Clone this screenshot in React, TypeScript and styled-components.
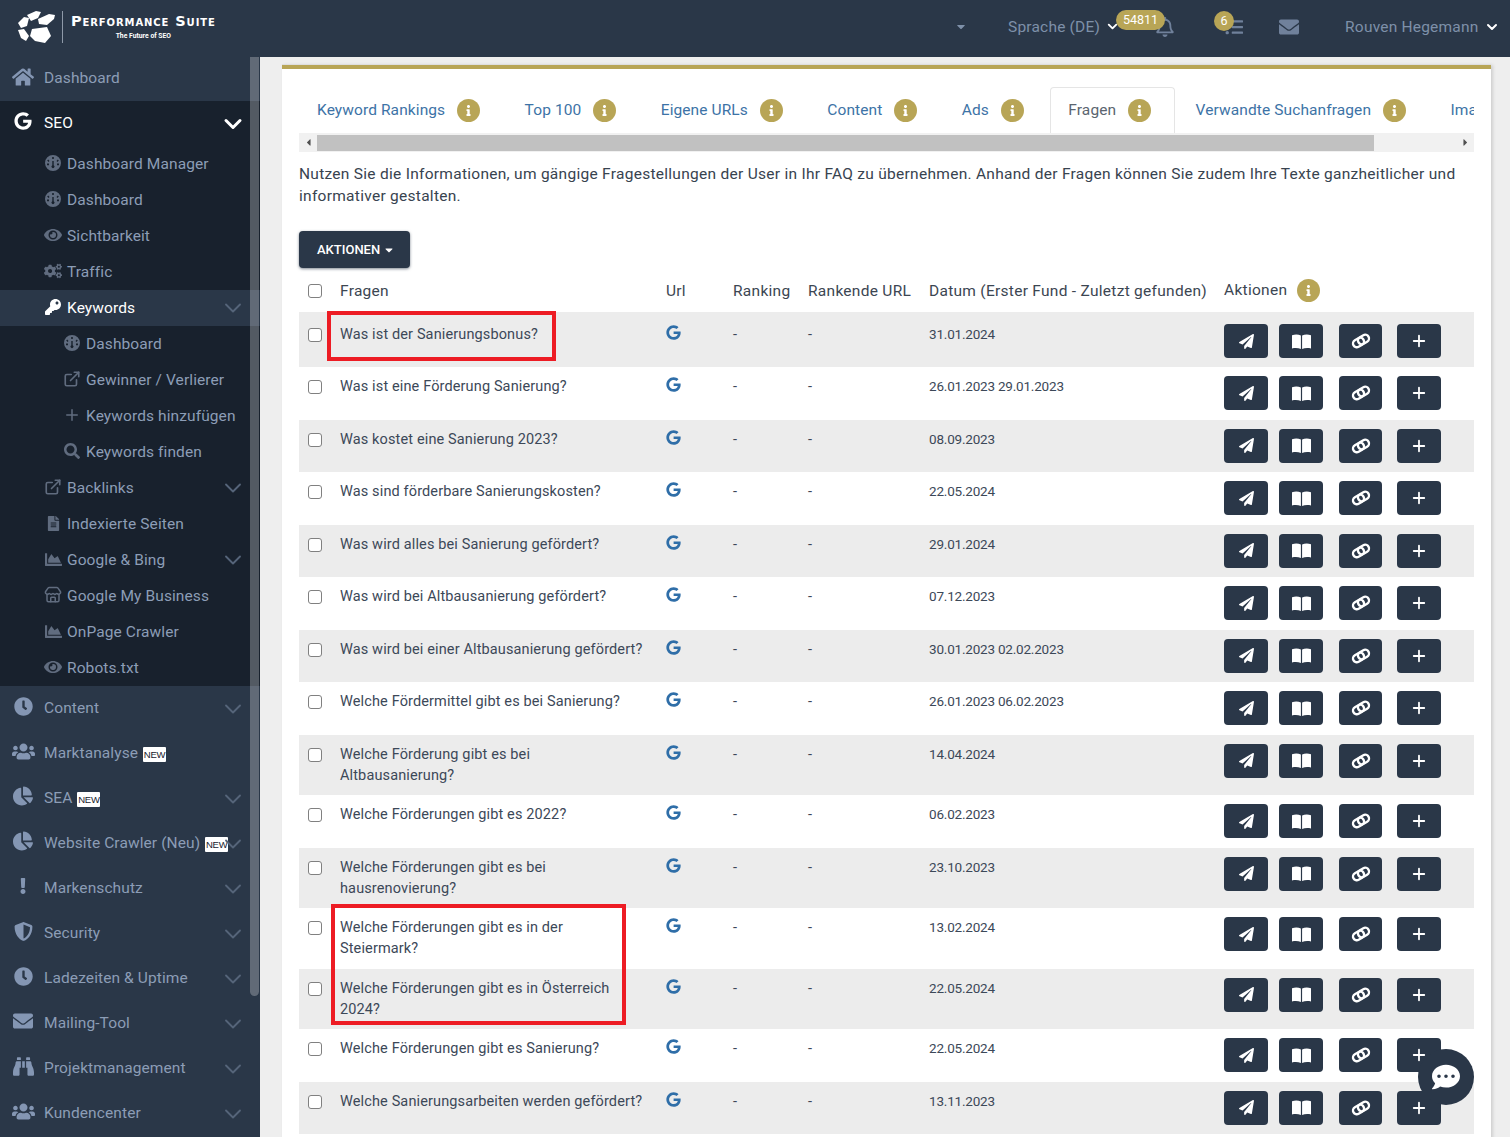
import React from 'react';
import styled, { createGlobalStyle } from 'styled-components';
import {
  FaHome, FaGoogle, FaEye, FaCogs, FaKey, FaSearch, FaFileAlt, FaChartArea, FaClock, FaUsers,
  FaChartPie, FaExclamation, FaShieldAlt, FaEnvelope, FaBinoculars, FaPaperPlane,
  FaInfo, FaRegBell, FaTasks, FaCommentDots, FaCaretDown, FaCaretLeft, FaCaretRight,
} from 'react-icons/fa';
import { ChevronDown, ExternalLink, Plus, Store } from 'lucide-react';

const FONT = `Roboto, "Noto Sans", sans-serif`;

const Global = createGlobalStyle`
  html, body { margin: 0; padding: 0; height: 1137px; overflow: hidden; background: #eeeeee; }
  body { font-family: ${FONT}; }
  * { box-sizing: border-box; }
`;

const Page = styled.div`
  width: 1510px;
  height: 1137px;
  overflow: hidden;
  position: relative;
  display: flex;
  flex-direction: column;
`;

const Topbar = styled.header`
  height: 57px;
  flex: none;
  background: #2a3748;
  display: flex;
  align-items: center;
  padding-bottom: 4px;
  color: #7e90a9;
  font-size: 15.5px;
  letter-spacing: 0.2px;
`;
const LogoBox = styled.div`
  display: flex;
  align-items: center;
  width: 260px;
  padding-left: 17px;
  flex: none;
`;
const LogoRule = styled.div`
  width: 1px;
  height: 32px;
  background: #8e99a8;
  margin: 0 8px 0 2px;
`;
const LogoText = styled.div`
  color: #fff;
  text-align: center;
`;
const LogoTitle = styled.div`
  font-family: "DejaVu Sans", sans-serif;
  font-variant: small-caps;
  font-size: 14.5px;
  font-weight: 700;
  letter-spacing: 0.9px;
  line-height: 17px;
  white-space: nowrap;
`;
const LogoSub = styled.div`
  font-size: 6.8px;
  font-weight: 700;
  line-height: 9px;
  margin-top: 2px;
  letter-spacing: 0;
`;
const TopCaret = styled.span`
  margin-left: 696px;
  width: 10px;
  display: flex;
  color: #7e90a9;
  font-size: 13px;
`;
const TopLabel = styled.span<{ $ml: number }>`
  margin-left: ${(p) => p.$ml}px;
  white-space: nowrap;
`;
const TopChevron = styled.span<{ $ml: number }>`
  margin-left: ${(p) => p.$ml}px;
  display: flex;
  color: #fff;
`;
const TopIcon = styled.span<{ $ml: number; $w: number }>`
  margin-left: ${(p) => p.$ml}px;
  width: ${(p) => p.$w}px;
  position: relative;
  display: flex;
  justify-content: center;
  color: #70819b;
`;
const PillBadge = styled.span`
  position: absolute;
  top: -7px;
  right: 9px;
  height: 20px;
  width: 49px;
  border-radius: 10px;
  background: #b8a556;
  color: #fff;
  font-size: 12.5px;
  line-height: 20px;
  text-align: center;
  letter-spacing: 0;
`;
const RoundBadge = styled.span`
  position: absolute;
  top: -7px;
  left: -11px;
  width: 20px;
  height: 20px;
  border-radius: 50%;
  background: #b8a556;
  color: #fff;
  font-size: 12.5px;
  line-height: 20px;
  text-align: center;
  letter-spacing: 0;
`;

const Body = styled.div`
  flex: 1;
  display: flex;
  min-height: 0;
`;

const Sidebar = styled.nav`
  width: 260px;
  flex: none;
  background: #2a3748;
  position: relative;
  overflow: hidden;
  font-size: 15.5px;
  letter-spacing: 0.1px;
`;
const ScrollThumb = styled.div`
  position: absolute;
  top: 0;
  left: 250px;
  width: 9px;
  height: 939px;
  border-radius: 0 0 5px 5px;
  background: rgba(255, 255, 255, 0.26);
`;
const TopItem = styled.div<{ $active?: boolean; $first?: boolean }>`
  height: ${(p) => (p.$first ? 44 : 45)}px;
  display: flex;
  align-items: center;
  position: relative;
  color: ${(p) => (p.$active ? '#fff' : '#8c9db6')};
  background: ${(p) => (p.$active ? '#18212d' : 'transparent')};
  padding: 0 0 2px 44px;
  white-space: nowrap;
`;
const TopItemIcon = styled.span<{ $active?: boolean }>`
  position: absolute;
  left: 11px;
  width: 24px;
  top: 0;
  bottom: 5px;
  display: flex;
  align-items: center;
  justify-content: center;
  color: ${(p) => (p.$active ? '#fff' : '#8496b3')};
`;
const NewBadge = styled.span`
  background: #fff;
  color: #18212d;
  font-family: "Liberation Sans", sans-serif;
  font-size: 9.5px;
  line-height: 15px;
  height: 15px;
  width: 23px;
  text-align: center;
  margin-left: 5px;
  margin-top: 4px;
  border-radius: 1px;
  letter-spacing: -0.2px;
`;
const Chevron = styled.span<{ $active?: boolean }>`
  position: absolute;
  left: 219px;
  top: 50%;
  transform: translateY(-50%);
  display: flex;
  color: ${(p) => (p.$active ? '#fff' : '#556479')};
`;
const SubList = styled.div`
  background: #18212d;
`;
const SubItem = styled.div<{ $open?: boolean; $deep?: boolean }>`
  height: 36px;
  display: flex;
  align-items: center;
  position: relative;
  padding: 0 0 1px ${(p) => (p.$deep ? 86 : 67)}px;
  color: ${(p) => (p.$open ? '#fff' : '#8c9db6')};
  background: ${(p) => (p.$open ? '#2a3748' : 'transparent')};
  white-space: nowrap;
`;
const SubIcon = styled.span<{ $deep?: boolean; $open?: boolean }>`
  position: absolute;
  left: ${(p) => (p.$deep ? 63 : 44)}px;
  width: 18px;
  height: 36px;
  top: -1px;
  display: flex;
  align-items: center;
  justify-content: center;
  color: ${(p) => (p.$open ? '#fff' : '#606c7f')};
`;

const Main = styled.main`
  flex: 1;
  min-width: 0;
  padding: 8px 19px 0 22px;
  overflow: hidden;
`;
const Card = styled.section`
  background: #fff;
  border-top: 4px solid #b8a556;
  box-shadow: 0 -1px 0 #dedede, 2px 0 3px #cfcfcf;
  padding: 18px 17px 0;
  height: 1100px;
  color: #3c4858;
`;
const TabRow = styled.div`
  display: flex;
  height: 46px;
  overflow: hidden;
`;
const Tab = styled.div<{ $active?: boolean }>`
  flex: none;
  display: flex;
  align-items: center;
  gap: 12px;
  padding: 0 23px 1px 17px;
  margin-right: 2.4px;
  height: 46px;
  font-size: 15.5px;
  letter-spacing: 0.1px;
  white-space: nowrap;
  color: ${(p) => (p.$active ? '#5b6570' : '#3d73a6')};
  border: 1px solid ${(p) => (p.$active ? '#e5e5e5' : 'transparent')};
  border-bottom: none;
  border-radius: 4px 4px 0 0;
`;
const InfoDot = styled.span`
  width: 23px;
  height: 23px;
  flex: none;
  border-radius: 50%;
  background: #b8a556;
  color: #fff;
  display: flex;
  align-items: center;
  justify-content: center;
`;
const FakeScroll = styled.div`
  height: 19px;
  background: #f1f1f1;
  padding: 2px 0;
  display: flex;
  align-items: center;
`;
const ScrollArrow = styled.span`
  width: 18px;
  display: flex;
  justify-content: center;
  color: #505050;
  font-size: 11px;
  flex: none;
`;
const ScrollBar = styled.div`
  width: 1057px;
  height: 16px;
  background: #c1c1c1;
  flex: none;
`;
const ScrollRest = styled.div`
  flex: 1;
`;
const Intro = styled.p`
  margin: 11px 0 0;
  font-size: 15.5px;
  line-height: 22px;
  letter-spacing: 0.28px;
  color: #38434f;
`;
const ActionsButton = styled.button`
  display: flex;
  align-items: center;
  gap: 3px;
  margin: 24px 0 2px;
  width: 111px;
  height: 37px;
  padding: 0 0 0 18px;
  border: none;
  border-radius: 4px;
  background: #2a3748;
  box-shadow: 0 1px 3px rgba(42, 55, 72, 0.6);
  color: #fff;
  font-family: ${FONT};
  font-size: 13px;
  font-weight: 500;
`;
const TableWrap = styled.div`
  position: relative;
`;
const Table = styled.table`
  width: 1175px;
  table-layout: fixed;
  border-collapse: collapse;
  font-size: 14.5px;
  line-height: 21px;
  letter-spacing: 0.13px;
`;
const HeadCell = styled.th`
  padding: 11px 8px 10px;
  font-weight: 400;
  text-align: left;
  font-size: 15.5px;
  letter-spacing: 0.28px;
  white-space: nowrap;
  color: #3c4652;
`;
const HeadInner = styled.span`
  display: flex;
  align-items: center;
  gap: 10px;
  margin: -2px 0 0 1px;
`;
const Row = styled.tr<{ $even: boolean; $first: boolean; $h: number }>`
  background: ${(p) => (p.$even ? '#ffffff' : '#ececec')};
  height: ${(p) => p.$h}px;
  & > td {
    padding: ${(p) => (p.$first ? 12 : 9)}px 8px 0;
  }
`;
const Cell = styled.td`
  vertical-align: top;
  color: #3c4858;
`;
const DateCell = styled(Cell)`
  font-size: 13.5px;
  letter-spacing: -0.2px;
`;
const Check = styled.span`
  display: block;
  width: 14px;
  height: 14px;
  margin: 4px 0 0 1px;
  border: 1.5px solid #808080;
  border-radius: 3px;
  background: #fff;
`;
const HeadCheck = styled(Check)`
  margin-top: -2px;
`;
const UrlIcon = styled.span`
  display: flex;
  color: #2f6ea8;
  margin-top: 1px;
`;
const ButtonRow = styled.div`
  display: flex;
`;
const ActionBtn = styled.span<{ $ml: number; $w: number }>`
  width: ${(p) => p.$w}px;
  height: 34px;
  margin-left: ${(p) => p.$ml}px;
  border-radius: 4px;
  background: #2a3748;
  color: #fff;
  display: flex;
  align-items: center;
  justify-content: center;
`;
const RedBox = styled.div<{ $l: number; $t: number; $w: number; $h: number }>`
  position: absolute;
  left: ${(p) => p.$l}px;
  top: ${(p) => p.$t}px;
  width: ${(p) => p.$w}px;
  height: ${(p) => p.$h}px;
  border: 4px solid #ed1c24;
  pointer-events: none;
`;
const ChatBubble = styled.div`
  position: absolute;
  left: 1418px;
  top: 1049px;
  width: 56px;
  height: 56px;
  border-radius: 50%;
  background: #2a3748;
  color: #fff;
  display: flex;
  align-items: center;
  justify-content: center;
`;
const LogoSvg = () => (
  <svg width="43" height="33" viewBox="0 0 43 33" fill="#fff">
    <polygon points="1,13 7,7 12,8 10,16 4,18" />
    <polygon points="10,5 19,1 24,2 21,8 14,11" />
    <polygon points="21,9 32,4 38,5 37,9 30,15 22,14" />
    <polygon points="1,20 7,19 12,26 9,31 4,28" />
    <polygon points="15,19 30,17 34,26 28,33 18,31 13,26" />
  </svg>
);
const Gauge = ({ size = 16 }: { size?: number }) => (
  <svg width={size} height={size} viewBox="0 0 16 16" fill="currentColor">
    <path
      fillRule="evenodd"
      d="M8 0a8 8 0 1 1 0 16A8 8 0 0 1 8 0ZM7.2 2v2h1.6V2ZM3.2 4.6l-1 1 1.3 1.3 1-1ZM12.8 4.6l-1.3 1.3 1 1 1.3-1.3ZM7.3 6v4.2a1.5 1.5 0 1 0 1.4 0V6ZM2 8.6v1.6h2V8.6ZM12 8.6v1.6h2V8.6Z"
    />
  </svg>
);
const BookIcon = () => (
  <svg width="19" height="15" viewBox="0 0 19 15" fill="currentColor">
    <path d="M0 1.2C3 .2 6.4.2 8.9 1.6V15C6.4 13.8 3 13.8 0 14.4ZM19 1.2C16 .2 12.6.2 10.1 1.6V15c2.5-1.2 5.9-1.2 8.9-.6Z" />
  </svg>
);
const ChainIcon = () => (
  <svg width="20" height="16" viewBox="0 0 20 16" fill="none" stroke="currentColor" strokeWidth="2.4">
    <rect x="1.75" y="5.75" width="11.5" height="7.5" rx="3.75" transform="rotate(-30 7.5 9.5)" />
    <rect x="6.75" y="2.75" width="11.5" height="7.5" rx="3.75" transform="rotate(-30 12.5 6.5)" />
  </svg>
);

type Top = { label: string; icon: React.ReactNode; chev?: boolean; isNew?: boolean };
const sub: { label: string; icon: React.ReactNode; chev?: boolean; deep?: boolean; open?: boolean }[] = [
  { label: 'Dashboard Manager', icon: <Gauge /> },
  { label: 'Dashboard', icon: <Gauge /> },
  { label: 'Sichtbarkeit', icon: <FaEye size={18} /> },
  { label: 'Traffic', icon: <FaCogs size={20} /> },
  { label: 'Keywords', icon: <FaKey size={16} />, chev: true, open: true },
  { label: 'Dashboard', icon: <Gauge />, deep: true },
  { label: 'Gewinner / Verlierer', icon: <ExternalLink size={18} strokeWidth={2.2} />, deep: true },
  { label: 'Keywords hinzufügen', icon: <Plus size={18} strokeWidth={2} />, deep: true },
  { label: 'Keywords finden', icon: <FaSearch size={16} />, deep: true },
  { label: 'Backlinks', icon: <ExternalLink size={18} strokeWidth={2.2} />, chev: true },
  { label: 'Indexierte Seiten', icon: <FaFileAlt size={15} /> },
  { label: 'Google & Bing', icon: <FaChartArea size={17} />, chev: true },
  { label: 'Google My Business', icon: <Store size={18} /> },
  { label: 'OnPage Crawler', icon: <FaChartArea size={17} /> },
  { label: 'Robots.txt', icon: <FaEye size={18} /> },
];
const tops: Top[] = [
  { label: 'Content', icon: <FaClock size={19} />, chev: true },
  { label: 'Marktanalyse', icon: <FaUsers size={23} />, isNew: true },
  { label: 'SEA', icon: <FaChartPie size={20} />, chev: true, isNew: true },
  { label: 'Website Crawler (Neu)', icon: <FaChartPie size={20} />, chev: true, isNew: true },
  { label: 'Markenschutz', icon: <FaExclamation size={16} />, chev: true },
  { label: 'Security', icon: <FaShieldAlt size={19} />, chev: true },
  { label: 'Ladezeiten & Uptime', icon: <FaClock size={19} />, chev: true },
  { label: 'Mailing-Tool', icon: <FaEnvelope size={20} />, chev: true },
  { label: 'Projektmanagement', icon: <FaBinoculars size={21} />, chev: true },
  { label: 'Kundencenter', icon: <FaUsers size={23} />, chev: true },
];
const tabs = ['Keyword Rankings', 'Top 100', 'Eigene URLs', 'Content', 'Ads', 'Fragen', 'Verwandte Suchanfragen', 'Images'];
const rows: { q: React.ReactNode; d: string; h: number }[] = [
  { q: 'Was ist der Sanierungsbonus?', d: '31.01.2024', h: 55 },
  { q: 'Was ist eine Förderung Sanierung?', d: '26.01.2023 29.01.2023', h: 52.5 },
  { q: 'Was kostet eine Sanierung 2023?', d: '08.09.2023', h: 52.5 },
  { q: 'Was sind förderbare Sanierungskosten?', d: '22.05.2024', h: 52.5 },
  { q: 'Was wird alles bei Sanierung gefördert?', d: '29.01.2024', h: 52.5 },
  { q: 'Was wird bei Altbausanierung gefördert?', d: '07.12.2023', h: 52.5 },
  { q: 'Was wird bei einer Altbausanierung gefördert?', d: '30.01.2023 02.02.2023', h: 52.5 },
  { q: 'Welche Fördermittel gibt es bei Sanierung?', d: '26.01.2023 06.02.2023', h: 52.5 },
  { q: <>Welche Förderung gibt es bei<br />Altbausanierung?</>, d: '14.04.2024', h: 60.5 },
  { q: 'Welche Förderungen gibt es 2022?', d: '06.02.2023', h: 52.5 },
  { q: <>Welche Förderungen gibt es bei<br />hausrenovierung?</>, d: '23.10.2023', h: 60.5 },
  { q: <>Welche Förderungen gibt es in der<br />Steiermark?</>, d: '13.02.2024', h: 60.5 },
  { q: <>Welche Förderungen gibt es in Österreich<br />2024?</>, d: '22.05.2024', h: 60.5 },
  { q: 'Welche Förderungen gibt es Sanierung?', d: '22.05.2024', h: 52.5 },
  { q: 'Welche Sanierungsarbeiten werden gefördert?', d: '13.11.2023', h: 52.5 },
];

const Info = () => (
  <InfoDot>
    <FaInfo size={11} />
  </InfoDot>
);

export default function App() {
  return (
    <Page>
      <Global />
      <Topbar>
        <LogoBox>
          <LogoSvg />
          <LogoRule />
          <LogoText>
            <LogoTitle>Performance Suite</LogoTitle>
            <LogoSub>The Future of SEO</LogoSub>
          </LogoText>
        </LogoBox>
        <TopCaret><FaCaretDown /></TopCaret>
        <TopLabel $ml={42}>Sprache (DE)</TopLabel>
        <TopChevron $ml={5}><ChevronDown size={15} strokeWidth={3} /></TopChevron>
        <TopIcon $ml={36} $w={18}>
          <FaRegBell size={20} />
          <PillBadge>54811</PillBadge>
        </TopIcon>
        <TopIcon $ml={51} $w={18}>
          <FaTasks size={18} />
          <RoundBadge>6</RoundBadge>
        </TopIcon>
        <TopIcon $ml={36} $w={20}>
          <FaEnvelope size={20} />
        </TopIcon>
        <TopLabel $ml={46}>Rouven Hegemann</TopLabel>
        <TopChevron $ml={6}><ChevronDown size={16} strokeWidth={3} /></TopChevron>
      </Topbar>
      <Body>
        <Sidebar>
          <TopItem $first>
            <TopItemIcon><FaHome size={22} /></TopItemIcon>
            Dashboard
          </TopItem>
          <TopItem $active>
            <TopItemIcon $active><FaGoogle size={18} /></TopItemIcon>
            SEO
            <Chevron $active><ChevronDown size={28} strokeWidth={2.6} /></Chevron>
          </TopItem>
          <SubList>
            {sub.map((s, i) => (
              <SubItem key={i} $open={s.open} $deep={s.deep}>
                <SubIcon $deep={s.deep} $open={s.open}>{s.icon}</SubIcon>
                {s.label}
                {s.chev && <Chevron><ChevronDown size={28} strokeWidth={1.6} /></Chevron>}
              </SubItem>
            ))}
          </SubList>
          {tops.map((t) => (
            <TopItem key={t.label}>
              <TopItemIcon>{t.icon}</TopItemIcon>
              {t.label}
              {t.isNew && <NewBadge>NEW</NewBadge>}
              {t.chev && <Chevron><ChevronDown size={28} strokeWidth={1.6} /></Chevron>}
            </TopItem>
          ))}
          <ScrollThumb />
        </Sidebar>
        <Main>
          <Card>
            <TabRow>
              {tabs.map((t) => (
                <Tab key={t} $active={t === 'Fragen'}>
                  {t}
                  <Info />
                </Tab>
              ))}
            </TabRow>
            <FakeScroll>
              <ScrollArrow><FaCaretLeft /></ScrollArrow>
              <ScrollBar />
              <ScrollRest />
              <ScrollArrow><FaCaretRight /></ScrollArrow>
            </FakeScroll>
            <Intro>
              Nutzen Sie die Informationen, um gängige Fragestellungen der User in Ihr FAQ zu übernehmen. Anhand der
              Fragen können Sie zudem Ihre Texte ganzheitlicher und informativer gestalten.
            </Intro>
            <ActionsButton>AKTIONEN <FaCaretDown size={12} /></ActionsButton>
            <TableWrap>
              <Table>
                <colgroup>
                  <col style={{ width: 33 }} />
                  <col style={{ width: 326 }} />
                  <col style={{ width: 67 }} />
                  <col style={{ width: 75 }} />
                  <col style={{ width: 121 }} />
                  <col style={{ width: 294 }} />
                  <col style={{ width: 259 }} />
                </colgroup>
                <thead>
                  <tr>
                    <HeadCell><HeadCheck /></HeadCell>
                    <HeadCell>Fragen</HeadCell>
                    <HeadCell>Url</HeadCell>
                    <HeadCell>Ranking</HeadCell>
                    <HeadCell>Rankende URL</HeadCell>
                    <HeadCell>Datum (Erster Fund - Zuletzt gefunden)</HeadCell>
                    <HeadCell><HeadInner>Aktionen <Info /></HeadInner></HeadCell>
                  </tr>
                </thead>
                <tbody>
                  {rows.map((r, i) => (
                    <Row key={i} $even={i % 2 === 1} $first={i === 0} $h={r.h}>
                      <Cell><Check /></Cell>
                      <Cell>{r.q}</Cell>
                      <Cell><UrlIcon><FaGoogle size={15} /></UrlIcon></Cell>
                      <Cell>-</Cell>
                      <Cell>-</Cell>
                      <DateCell>{r.d}</DateCell>
                      <Cell>
                        <ButtonRow>
                          <ActionBtn $ml={1} $w={44}><FaPaperPlane size={15} /></ActionBtn>
                          <ActionBtn $ml={11} $w={44}><BookIcon /></ActionBtn>
                          <ActionBtn $ml={16} $w={43}><ChainIcon /></ActionBtn>
                          <ActionBtn $ml={15} $w={44}><Plus size={18} strokeWidth={2.4} /></ActionBtn>
                        </ButtonRow>
                      </Cell>
                    </Row>
                  ))}
                </tbody>
              </Table>
              <RedBox $l={28} $t={41} $w={229} $h={50} />
              <RedBox $l={32} $t={634} $w={295} $h={121} />
            </TableWrap>
          </Card>
        </Main>
      </Body>
      <ChatBubble><FaCommentDots size={28} /></ChatBubble>
    </Page>
  );
}
